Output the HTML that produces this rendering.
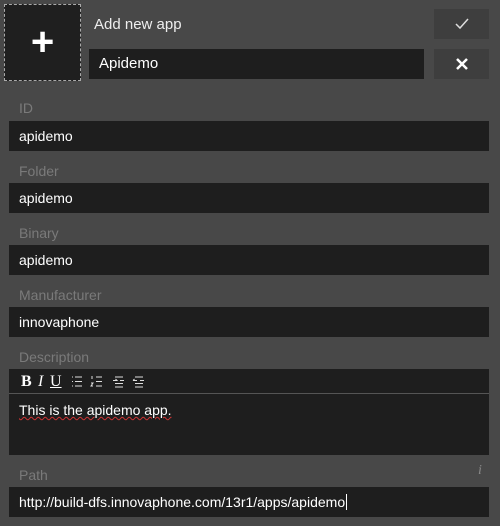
<!DOCTYPE html>
<html><head><style>
body{margin:0;width:500px;height:526px;background:#484848;font-family:"Liberation Sans",sans-serif;position:relative;overflow:hidden}
.a{position:absolute}
.plus{left:4px;top:4px;width:75px;height:75px;border:1px dashed #aaa;background:#1f1f1f;color:#fff;font-size:40px;text-align:center;line-height:74px;font-weight:bold}
.title{left:94px;top:16px;color:#eee;font-size:15px}
.in{background:#1e1e1e;color:#fff;font-size:14px;box-sizing:border-box;padding-left:10px;line-height:30px;height:30px}
.btn{background:#3e3e3e;left:434px;width:55px;height:30px;color:#fff;text-align:center;line-height:30px}
.lbl{left:19px;color:#7a7a7a;font-size:14px}
</style></head><body>
<div class="a plus">+</div>
<div class="a title">Add new app</div>
<div class="a in" style="left:89px;top:49px;width:335px;font-size:15px">Apidemo</div>
<div class="a btn" style="top:9px"><svg width="16" height="14" viewBox="0 0 16 14" style="margin-top:8px"><path d="M2 7l4 4 8-9" stroke="#ddd" stroke-width="1.5" fill="none"/></svg></div>
<div class="a btn" style="top:49px"><svg width="14" height="14" viewBox="0 0 14 14" style="margin-top:8px"><path d="M2 2l10 10M12 2L2 12" stroke="#fff" stroke-width="2.5"/></svg></div>

<div class="a lbl" style="top:100px">ID</div>
<div class="a in" style="left:9px;top:121px;width:480px">apidemo</div>
<div class="a lbl" style="top:163px">Folder</div>
<div class="a in" style="left:9px;top:183px;width:480px">apidemo</div>
<div class="a lbl" style="top:225px">Binary</div>
<div class="a in" style="left:9px;top:245px;width:480px">apidemo</div>
<div class="a lbl" style="top:287px">Manufacturer</div>
<div class="a in" style="left:9px;top:307px;width:480px">innovaphone</div>
<div class="a lbl" style="top:349px">Description</div>
<div class="a" style="left:9px;top:369px;width:480px;height:86px;background:#1e1e1e">
 <div style="height:24px;border-bottom:1px solid #555;position:relative">
  <span class="a" style="left:12px;top:4px;color:#fff;font-family:'Liberation Serif',serif;font-size:16px;font-weight:bold">B</span>
  <span class="a" style="left:29px;top:4px;color:#fff;font-family:'Liberation Serif',serif;font-size:16px;font-style:italic">I</span>
  <span class="a" style="left:41px;top:4px;color:#fff;font-family:'Liberation Serif',serif;font-size:16px;text-decoration:underline">U</span>
  <svg class="a" style="left:62px;top:6px" width="80" height="14" viewBox="0 0 80 14" stroke="#ddd" stroke-width="1" fill="none">
   <path d="M4 2h7M4 6.5h7M4 11h7M1 2h1M1 6.5h1M1 11h1"/>
   <path d="M25 2h6M25 6.5h6M25 11h6M21 1v3M20 8h2l-2 3h2"/>
   <path d="M44 2h8M49 5.5h4M44 8.5h8M44 12h8M42 5.5h4l-1.5-1.5"/>
   <path d="M64 2h8M69 5.5h4M64 8.5h8M64 12h8M62 5.5h4M62 5.5l1.5-1.5"/>
  </svg>
 </div>
 <div style="color:#fff;font-size:14px;padding:8px 0 0 10px;text-decoration:underline wavy #c33;text-decoration-thickness:1px">This is the apidemo app.</div>
</div>
<div class="a lbl" style="top:467px">Path</div>
<div class="a" style="left:478px;top:463px;color:#888;font-style:italic;font-family:'Liberation Serif',serif;font-size:14px">i</div>
<div class="a in" style="left:9px;top:487px;width:480px">http://build-dfs.innovaphone.com/13r1/apps/apidemo<span style="border-left:1px solid #fff;margin-left:1px"></span></div>
</body></html>
